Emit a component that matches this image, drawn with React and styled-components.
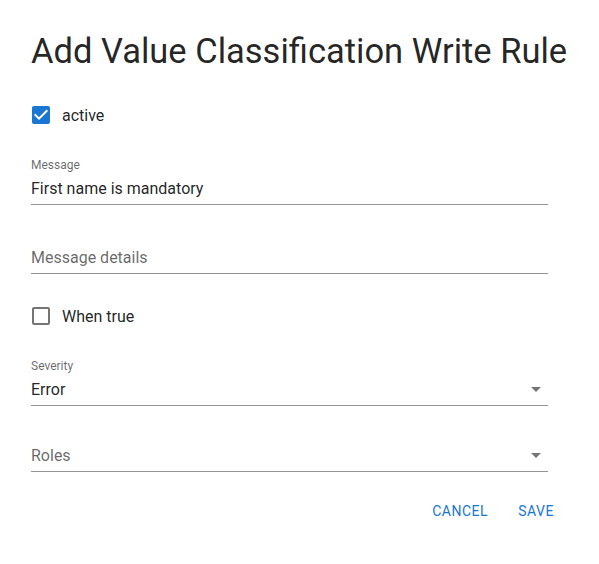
import React from "react";
import styled, { createGlobalStyle } from "styled-components";

const GlobalStyle = createGlobalStyle`
  body {
    margin: 0;
    background: #ffffff;
    font-family: Roboto, "Liberation Sans", Arial, sans-serif;
  }
`;

const Dialog = styled.div`
  width: 599px;
  height: 564px;
  box-sizing: border-box;
  padding: 31px 0 0 31px;
  background: #ffffff;
`;

const Title = styled.h2`
  margin: 0;
  font-size: 34.5px;
  line-height: 40px;
  font-weight: 400;
  color: rgba(0, 0, 0, 0.87);
  white-space: nowrap;
`;

const Form = styled.div`
  display: flex;
  flex-direction: column;
  width: 517px;
`;

const CheckRow = styled.label`
  display: flex;
  align-items: center;
  height: 42px;
  margin-left: -11px;
  margin-top: ${(p) => p.$top}px;
  cursor: pointer;
`;

const CheckIcon = styled.span`
  display: flex;
  padding: 9px;
  color: ${(p) => (p.$checked ? "#1976d2" : "rgba(0, 0, 0, 0.54)")};
`;

const CheckText = styled.span`
  font-size: 16px;
  color: rgba(0, 0, 0, 0.87);
`;

const Field = styled.div`
  position: relative;
  margin-top: ${(p) => p.$top}px;
  border-bottom: 1px solid rgba(0, 0, 0, 0.42);
`;

const Label = styled.div`
  height: 14px;
  font-size: 12px;
  line-height: 14px;
  color: rgba(0, 0, 0, 0.6);
`;

const Value = styled.div`
  padding: 7px 0 6px;
  font-size: 16px;
  line-height: 19px;
  height: 19px;
  color: ${(p) => (p.$placeholder ? "rgba(0, 0, 0, 0.6)" : "rgba(0, 0, 0, 0.87)")};
`;

const Arrow = styled.svg`
  position: absolute;
  right: 0;
  bottom: 4px;
  width: 24px;
  height: 24px;
  fill: rgba(0, 0, 0, 0.54);
`;

const Actions = styled.div`
  display: flex;
  justify-content: flex-end;
  gap: 8px;
  width: 537px;
  margin-top: 21px;
`;

const TextButton = styled.button`
  min-width: 64px;
  height: 36px;
  padding: 6px 8px;
  border: 0;
  background: transparent;
  font-family: inherit;
  font-size: 14px;
  font-weight: 400;
  letter-spacing: 0.5px;
  text-transform: uppercase;
  color: #1976d2;
  cursor: pointer;
`;

const CheckedPath =
  "M19 3H5c-1.11 0-2 .9-2 2v14c0 1.1.89 2 2 2h14c1.11 0 2-.9 2-2V5c0-1.1-.89-2-2-2zm-9 14l-5-5 1.41-1.41L10 14.17l7.59-7.59L19 8l-9 9z";
const EmptyPath =
  "M19 5v14H5V5h14m0-2H5c-1.1 0-2 .9-2 2v14c0 1.1.9 2 2 2h14c1.1 0 2-.9 2-2V5c0-1.1-.9-2-2-2z";

const Checkbox = ({ checked, label, top }) => (
  <CheckRow $top={top}>
    <CheckIcon $checked={checked}>
      <svg width="24" height="24" viewBox="0 0 24 24" fill="currentColor">
        <path d={checked ? CheckedPath : EmptyPath} />
      </svg>
    </CheckIcon>
    <CheckText>{label}</CheckText>
  </CheckRow>
);

const TextField = ({ label, value, placeholder, select, top }) => (
  <Field $top={top}>
    <Label>{label}</Label>
    <Value $placeholder={!value}>{value || placeholder}</Value>
    {select && (
      <Arrow viewBox="0 0 24 24">
        <path d="M7 10l5 5 5-5z" />
      </Arrow>
    )}
  </Field>
);

export default function App() {
  return (
    <>
      <GlobalStyle />
      <Dialog>
        <Title>Add Value Classification Write Rule</Title>
        <Form>
          <Checkbox checked label="active" top={23} />
          <TextField label="Message" value="First name is mandatory" top={22} />
          <TextField placeholder="Message details" top={22} />
          <Checkbox label="When true" top={21} />
          <TextField label="Severity" value="Error" select top={22} />
          <TextField placeholder="Roles" select top={19} />
        </Form>
        <Actions>
          <TextButton>Cancel</TextButton>
          <TextButton>Save</TextButton>
        </Actions>
      </Dialog>
    </>
  );
}
